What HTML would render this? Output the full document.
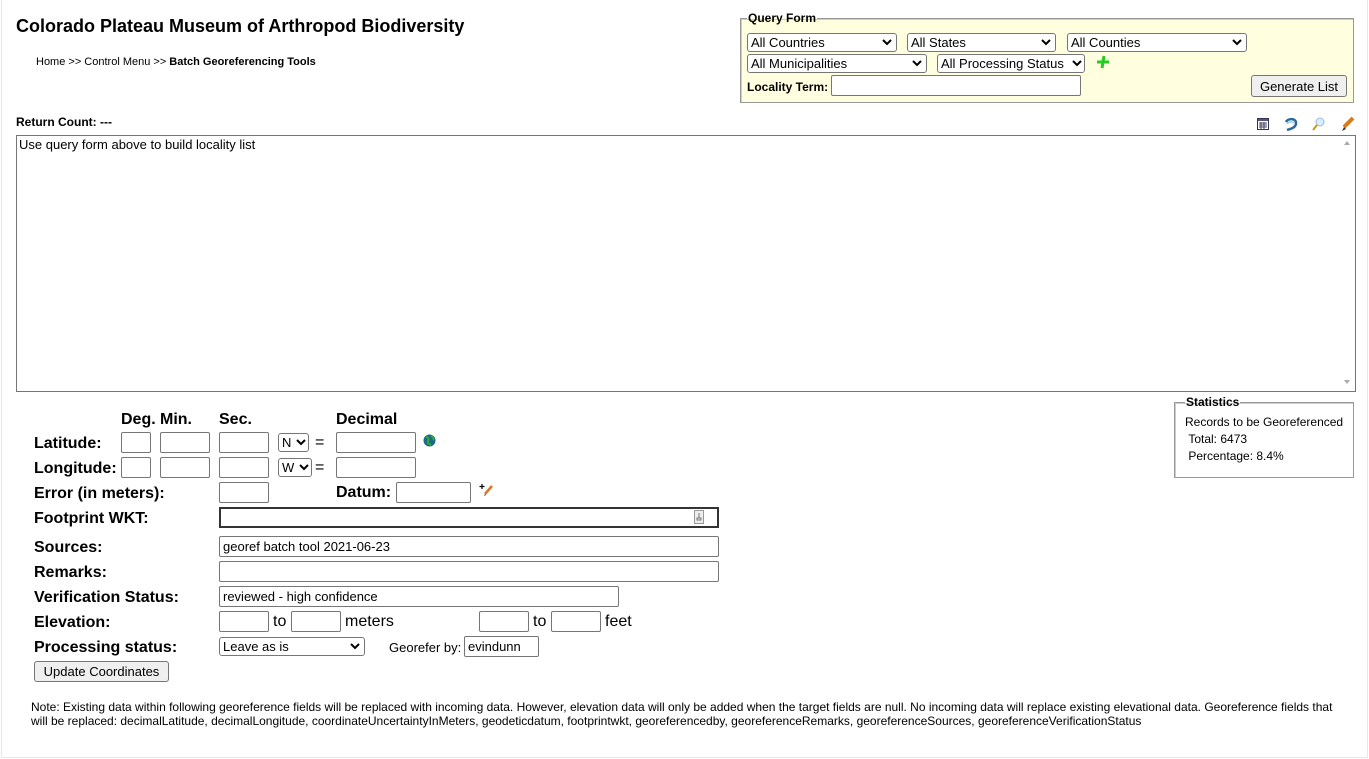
<!DOCTYPE html>
<html><head><meta charset="utf-8"><style>
*{box-sizing:border-box;margin:0;padding:0}
body{width:1369px;height:759px;background:#fff;font-family:"Liberation Sans",Arial,sans-serif;color:#000;position:relative;overflow:hidden}
.a{position:absolute}
.frame{left:1px;top:-2px;width:1367px;height:760px;border:1px solid #eee8da}
.sel{position:absolute;height:19px;border:1px solid #767676;border-radius:3px;background:#fff;font-size:13px;line-height:18px;padding-left:3px;white-space:nowrap;overflow:hidden}
.sel svg{position:absolute;right:4px;top:5px}
.inp{position:absolute;height:21px;border:1px solid #767676;border-radius:2px;background:#fff;font-size:13px;line-height:20px;padding-left:3px;white-space:nowrap}
.lbl{position:absolute;font-size:16px;font-weight:bold;line-height:18px}
.btn{position:absolute;border:1px solid #767676;border-radius:3px;background:#efefef;font-size:13px;text-align:center}
fieldset{position:absolute;border:2px groove #c0c0c0}
legend{font-size:12px;font-weight:bold;padding:0 1px;margin-left:4px}
</style></head><body>
<div class="a frame"></div>
<div class="a" style="left:16px;top:16px;font-size:18px;font-weight:bold">Colorado Plateau Museum of Arthropod Biodiversity</div>
<div class="a" style="left:36px;top:56px;font-size:11px">Home &gt;&gt; Control Menu &gt;&gt; <b>Batch Georeferencing Tools</b></div>

<fieldset style="left:740px;top:11px;width:614px;height:92px;background:#ffffe0;border:1px solid #999;box-shadow:inset 1px 1px 0 #ccc"><legend style="margin-left:6px">Query Form</legend></fieldset>
<div class="sel" style="left:747px;top:33px;width:150px">All Countries<svg width="10" height="7"><path d="M1 1l4 4 4-4" stroke="#000" stroke-width="2" fill="none"/></svg></div>
<div class="sel" style="left:907px;top:33px;width:149px">All States<svg width="10" height="7"><path d="M1 1l4 4 4-4" stroke="#000" stroke-width="2" fill="none"/></svg></div>
<div class="sel" style="left:1067px;top:33px;width:180px">All Counties<svg width="10" height="7"><path d="M1 1l4 4 4-4" stroke="#000" stroke-width="2" fill="none"/></svg></div>
<div class="sel" style="left:747px;top:54px;width:180px">All Municipalities<svg width="10" height="7"><path d="M1 1l4 4 4-4" stroke="#000" stroke-width="2" fill="none"/></svg></div>
<div class="sel" style="left:937px;top:54px;width:148px">All Processing Status<svg width="10" height="7" style="right:2px"><path d="M1 1l4 4 4-4" stroke="#000" stroke-width="2" fill="none"/></svg></div>
<svg class="a" style="left:1096px;top:55px" width="14" height="14"><path d="M8 1L6 13M1 7h12" stroke="#2c2" stroke-width="3"/></svg>
<div class="a" style="left:747px;top:80px;font-size:12px;font-weight:bold">Locality Term:</div>
<div class="inp" style="left:831px;top:75px;width:250px"></div>
<div class="btn" style="left:1251px;top:75px;width:96px;height:22px;line-height:21px">Generate List</div>

<div class="a" style="left:16px;top:115px;font-size:12px;font-weight:bold">Return Count: ---</div>
<svg class="a" style="left:1257px;top:118px" width="12" height="12"><rect x="0.5" y="0.5" width="11" height="11" fill="#fff" stroke="#335"/><rect x="1" y="1" width="10" height="2" fill="#557"/><path d="M2 5h8M2 7h8M2 9h8M4 4v7M7 4v7" stroke="#446" stroke-width="1"/></svg>
<svg class="a" style="left:1283px;top:116px" width="16" height="16"><path d="M3 6c2-4 10-4 10 1s-6 6-9 7" stroke="#2a6a9a" stroke-width="2.5" fill="none"/><path d="M4 8c1-2 5-3 7-1" stroke="#9cf" stroke-width="1.5" fill="none"/></svg>
<svg class="a" style="left:1312px;top:117px" width="14" height="14"><circle cx="8" cy="5" r="4" fill="#d8eefc" stroke="#9bd"/><path d="M5 8l-4 5" stroke="#c90" stroke-width="2"/></svg>
<svg class="a" style="left:1340px;top:116px" width="16" height="16"><path d="M13 2L4 11" stroke="#d97a20" stroke-width="4"/><path d="M4 11l-2 4 4-2z" fill="#333"/></svg>

<div class="a" style="left:16px;top:135px;width:1340px;height:257px;border:1px solid #767676;background:#fff"></div>
<div class="a" style="left:19px;top:137px;font-size:13px">Use query form above to build locality list</div>
<div class="a" style="left:1340px;top:136px;width:15px;height:255px;background:#fff"><div style="position:absolute;left:4px;top:5px;border:3px solid transparent;border-bottom:4px solid #aaa;border-top:0"></div><div style="position:absolute;left:4px;top:244px;border:3px solid transparent;border-top:4px solid #aaa;border-bottom:0"></div></div>

<fieldset style="left:1174px;top:395px;width:180px;height:83px;border:1px solid #999;box-shadow:inset 1px 1px 0 #ccc"><legend style="margin-left:10px">Statistics</legend></fieldset>
<div class="a" style="left:1185px;top:414px;font-size:12px;line-height:17px">Records to be Georeferenced<br>&nbsp;Total: 6473<br>&nbsp;Percentage: 8.4%</div>

<div class="lbl" style="left:121px;top:411px">Deg.</div>
<div class="lbl" style="left:160px;top:411px">Min.</div>
<div class="lbl" style="left:219px;top:411px">Sec.</div>
<div class="lbl" style="left:336px;top:411px">Decimal</div>

<div class="lbl" style="left:34px;top:435px">Latitude:</div>
<div class="inp" style="left:121px;top:432px;width:30px"></div>
<div class="inp" style="left:160px;top:432px;width:50px"></div>
<div class="inp" style="left:219px;top:432px;width:50px"></div>
<div class="sel" style="left:278px;top:433px;width:31px;height:19px">N<svg width="10" height="7" style="right:2px"><path d="M1 1l4 4 4-4" stroke="#000" stroke-width="2" fill="none"/></svg></div>
<div class="a" style="left:315px;top:434px;font-size:16px">=</div>
<div class="inp" style="left:336px;top:432px;width:80px"></div>
<svg class="a" style="left:423px;top:434px" width="13" height="13"><circle cx="6.5" cy="6.5" r="6" fill="#1c6a8a"/><path d="M3 3c2 0 3 2 2 4s1 3 3 4M8 2c2 1 3 3 2 4" stroke="#3a3" stroke-width="2" fill="none"/></svg>

<div class="lbl" style="left:34px;top:460px">Longitude:</div>
<div class="inp" style="left:121px;top:457px;width:30px"></div>
<div class="inp" style="left:160px;top:457px;width:50px"></div>
<div class="inp" style="left:219px;top:457px;width:50px"></div>
<div class="sel" style="left:278px;top:458px;width:34px;height:19px">W<svg width="10" height="7" style="right:2px"><path d="M1 1l4 4 4-4" stroke="#000" stroke-width="2" fill="none"/></svg></div>
<div class="a" style="left:315px;top:459px;font-size:16px">=</div>
<div class="inp" style="left:336px;top:457px;width:80px"></div>

<div class="lbl" style="left:34px;top:485px">Error (in meters):</div>
<div class="inp" style="left:219px;top:482px;width:50px"></div>
<div class="lbl" style="left:336px;top:484px">Datum:</div>
<div class="inp" style="left:396px;top:482px;width:75px"></div>
<svg class="a" style="left:479px;top:483px" width="16" height="14"><path d="M3 1v5M0.5 3.5h5" stroke="#000" stroke-width="1.2"/><path d="M13 3L6 11" stroke="#d97a20" stroke-width="2.5"/><path d="M6 11l-1 2 2-1z" fill="#333"/></svg>

<div class="lbl" style="left:34px;top:510px">Footprint WKT:</div>
<div class="a" style="left:219px;top:507px;width:500px;height:21px;border:2px solid #333;background:#fff"></div>
<svg class="a" style="left:694px;top:510px" width="10" height="14"><rect x="0.5" y="0.5" width="9" height="13" fill="#eee" stroke="#999"/><path d="M5 3v5M3 8h4v2H3z" stroke="#777" fill="none"/></svg>

<div class="lbl" style="left:34px;top:539px">Sources:</div>
<div class="inp" style="left:219px;top:536px;width:500px">georef batch tool 2021-06-23</div>
<div class="lbl" style="left:34px;top:564px">Remarks:</div>
<div class="inp" style="left:219px;top:561px;width:500px"></div>
<div class="lbl" style="left:34px;top:589px">Verification Status:</div>
<div class="inp" style="left:219px;top:586px;width:400px">reviewed - high confidence</div>
<div class="lbl" style="left:34px;top:614px">Elevation:</div>
<div class="inp" style="left:219px;top:611px;width:50px"></div>
<div class="a" style="left:273px;top:613px;font-size:16px">to</div>
<div class="inp" style="left:291px;top:611px;width:50px"></div>
<div class="a" style="left:345px;top:613px;font-size:16px">meters</div>
<div class="inp" style="left:479px;top:611px;width:50px"></div>
<div class="a" style="left:533px;top:613px;font-size:16px">to</div>
<div class="inp" style="left:551px;top:611px;width:50px"></div>
<div class="a" style="left:605px;top:613px;font-size:16px">feet</div>

<div class="lbl" style="left:34px;top:639px">Processing status:</div>
<div class="sel" style="left:219px;top:637px;width:146px;height:19px">Leave as is<svg width="10" height="7"><path d="M1 1l4 4 4-4" stroke="#000" stroke-width="2" fill="none"/></svg></div>
<div class="a" style="left:389px;top:640px;font-size:13px">Georefer by:</div>
<div class="inp" style="left:464px;top:636px;width:75px">evindunn</div>
<div class="btn" style="left:34px;top:661px;width:135px;height:21px;line-height:20px">Update Coordinates</div>

<div class="a" style="left:31px;top:700px;width:1310px;font-size:12px;line-height:14px">Note: Existing data within following georeference fields will be replaced with incoming data. However, elevation data will only be added when the target fields are null. No incoming data will replace existing elevational data. Georeference fields that will be replaced: decimalLatitude, decimalLongitude, coordinateUncertaintyInMeters, geodeticdatum, footprintwkt, georeferencedby, georeferenceRemarks, georeferenceSources, georeferenceVerificationStatus</div>
</body></html>
